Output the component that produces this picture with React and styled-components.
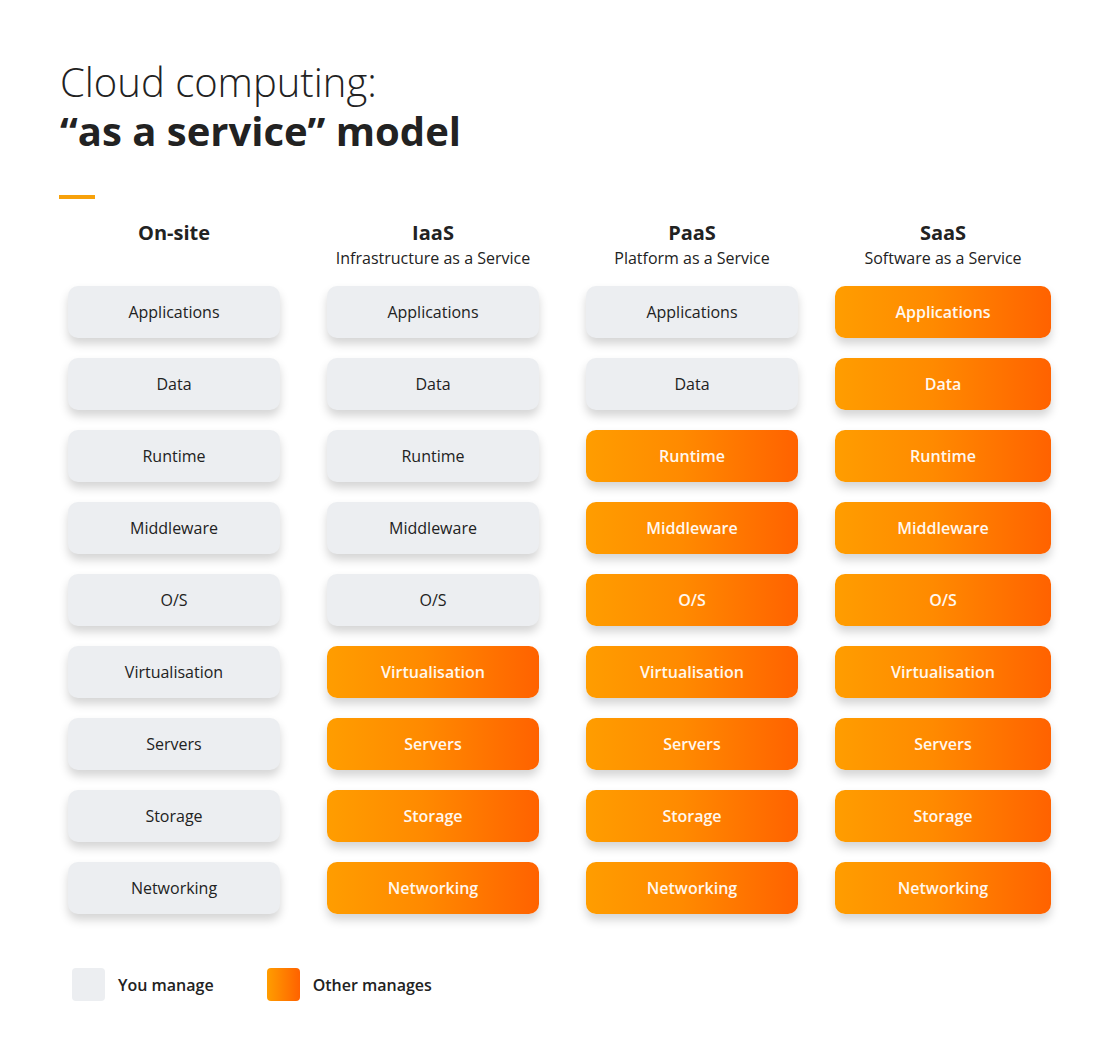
import React from 'react';
import styled, { createGlobalStyle } from 'styled-components';

const GlobalStyle = createGlobalStyle`
  body {
    margin: 0;
    background: #ffffff;
    font-family: "Open Sans", "Noto Sans", sans-serif;
    color: #222222;
  }
`;

const Page = styled.div`
  width: 1113px;
  min-height: 1047px;
  box-sizing: border-box;
  padding: 57px 0 0 60px;
`;

const Title = styled.h1`
  margin: 0;
  font-size: 40px;
  line-height: 49px;
  font-weight: 300;
  color: #222222;
`;

const TitleStrong = styled.span`
  display: block;
  font-weight: 700;
`;

const Accent = styled.div`
  width: 36px;
  height: 4px;
  background: #f7a10a;
  margin: 40px 0 21px -1px;
`;

const Grid = styled.div`
  display: grid;
  grid-template-columns: 259px 259px 249px 216px;
  margin-left: 8px;
`;

const Column = styled.div`
  display: flex;
  flex-direction: column;
  width: ${({ $wide }) => ($wide ? '216px' : '212px')};
`;

const Header = styled.div`
  height: 66px;
  text-align: center;
`;

const Name = styled.div`
  font-size: 20px;
  line-height: 26px;
  font-weight: 700;
  color: #222222;
`;

const Sub = styled.div`
  font-size: 16px;
  line-height: 24px;
  color: #222222;
`;

const Stack = styled.div`
  display: flex;
  flex-direction: column;
  gap: 20px;
`;

const Layer = styled.div`
  height: 52px;
  border-radius: 10px;
  display: flex;
  align-items: center;
  justify-content: center;
  font-size: 16px;
  font-weight: ${({ $other }) => ($other ? 600 : 400)};
  color: ${({ $other }) => ($other ? '#fff7ee' : '#222222')};
  background: ${({ $other }) =>
    $other ? 'linear-gradient(90deg, #ff9d00 0%, #ff8a00 45%, #ff6200 100%)' : '#eceef1'};
  box-shadow: 0 6px 10px rgba(0, 0, 0, 0.17);
`;

const Legend = styled.div`
  display: flex;
  align-items: center;
  margin: 54px 0 0 12px;
`;

const LegendItem = styled.div`
  display: flex;
  align-items: center;
  gap: 13px;
  margin-right: 53px;
  font-size: 16px;
  font-weight: 600;
  color: #222222;
`;

const Swatch = styled.span`
  width: 33px;
  height: 33px;
  border-radius: 4px;
  background: ${({ $other }) =>
    $other ? 'linear-gradient(90deg, #ff9d00 0%, #ff6200 100%)' : '#eceef1'};
`;

const layers = [
  'Applications',
  'Data',
  'Runtime',
  'Middleware',
  'O/S',
  'Virtualisation',
  'Servers',
  'Storage',
  'Networking',
];

// how many layers, counted from the top, you still manage yourself
const models = [
  { name: 'On-site', sub: '', own: 9 },
  { name: 'IaaS', sub: 'Infrastructure as a Service', own: 5 },
  { name: 'PaaS', sub: 'Platform as a Service', own: 2 },
  { name: 'SaaS', sub: 'Software as a Service', own: 0, wide: true },
];

const App = () => (
  <Page>
    <GlobalStyle />
    <Title>
      Cloud computing:
      <TitleStrong>“as a service” model</TitleStrong>
    </Title>
    <Accent />
    <Grid>
      {models.map((m) => (
        <Column key={m.name} $wide={m.wide}>
          <Header>
            <Name>{m.name}</Name>
            {m.sub && <Sub>{m.sub}</Sub>}
          </Header>
          <Stack>
            {layers.map((l, i) => (
              <Layer key={l} $other={i >= m.own}>
                {l}
              </Layer>
            ))}
          </Stack>
        </Column>
      ))}
    </Grid>
    <Legend>
      <LegendItem>
        <Swatch />
        You manage
      </LegendItem>
      <LegendItem>
        <Swatch $other />
        Other manages
      </LegendItem>
    </Legend>
  </Page>
);

export default App;
